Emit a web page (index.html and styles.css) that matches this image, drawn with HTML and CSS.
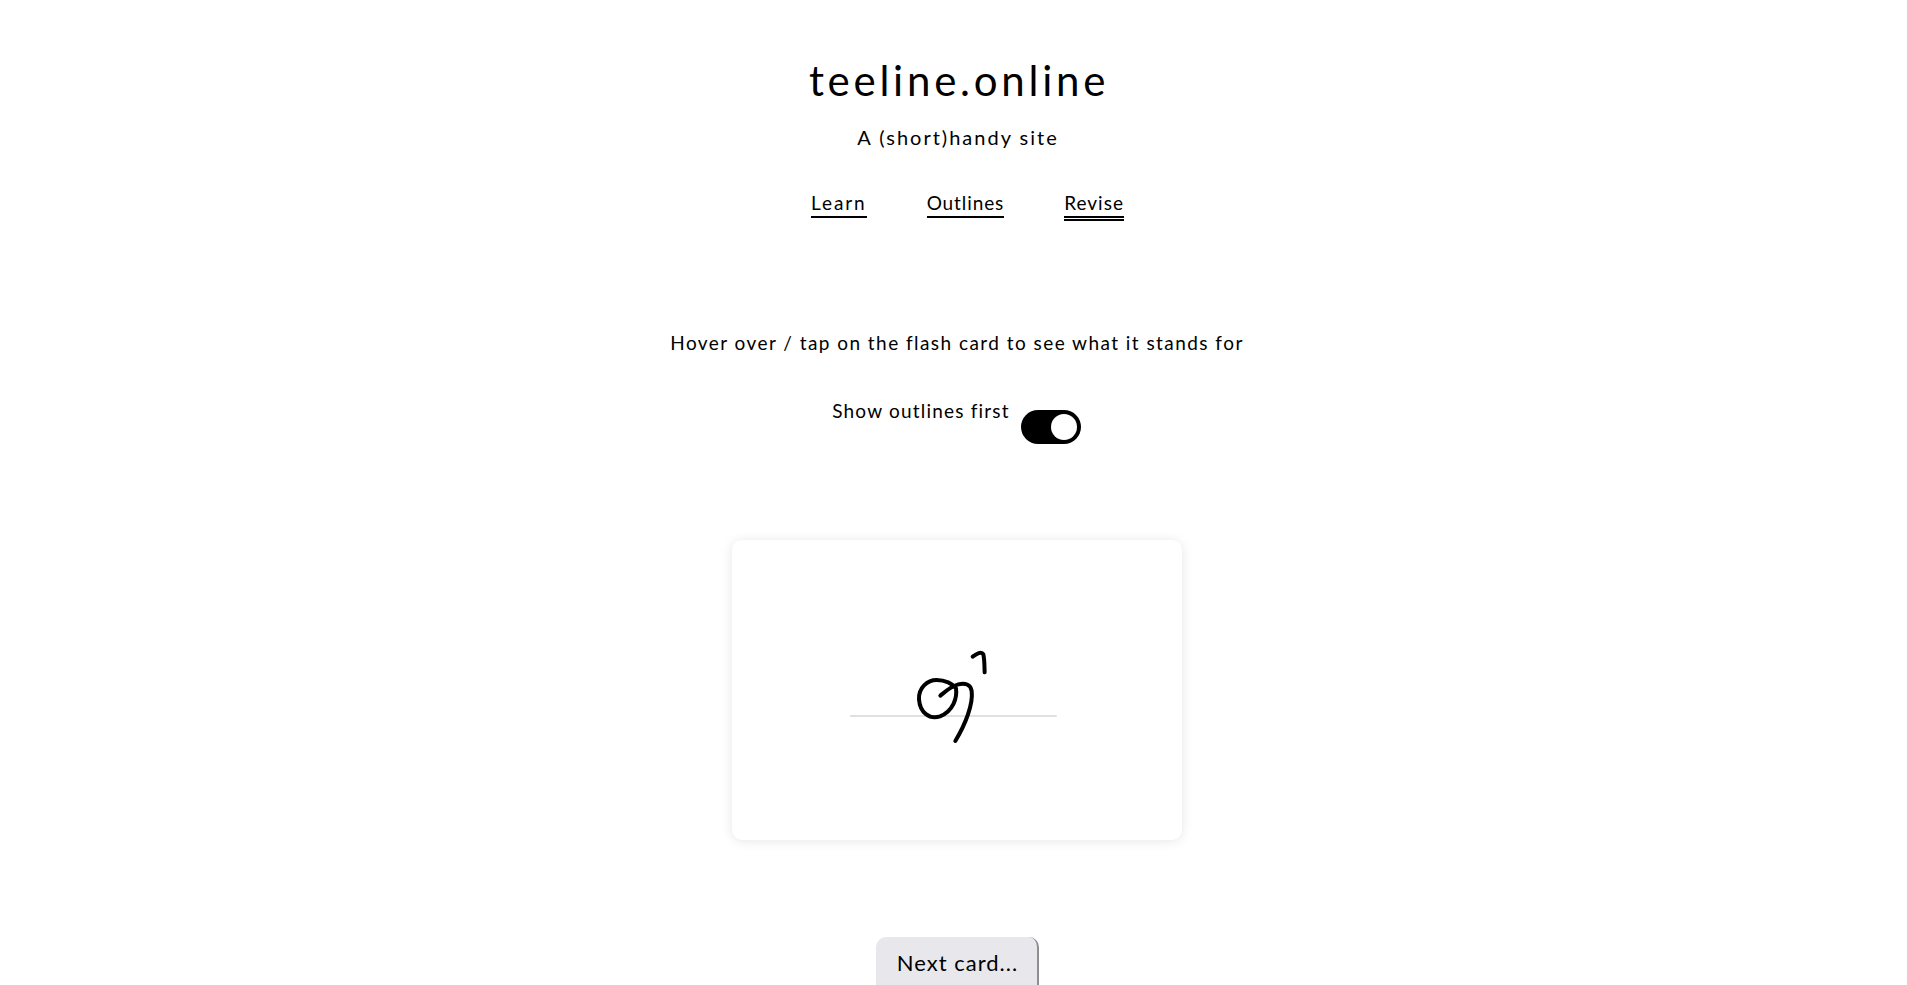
FILE: index.html
```html
<!DOCTYPE html>
<html lang="en">
<head>
<meta charset="utf-8">
<title>teeline.online</title>
<link rel="stylesheet" href="styles.css">
</head>
<body>
<div class="page">
  <header class="site-header">
    <h1 class="site-title">teeline.online</h1>
    <p class="site-tagline">A (short)handy site</p>
    <nav class="site-nav">
      <a class="nav-link nav-link-learn" href="#">Learn</a>
      <a class="nav-link nav-link-outlines" href="#">Outlines</a>
      <a class="nav-link nav-link-active" href="#">Revise</a>
    </nav>
  </header>
  <main class="revise">
    <p class="hint">Hover over / tap on the flash card to see what it stands for</p>
    <div class="toggle-row">
      <span class="toggle-label">Show outlines first</span>
      <span class="toggle"><span class="toggle-knob"></span></span>
    </div>
    <div class="flash-card">
      <svg class="outline" width="240" height="130" viewBox="-9 -18 720 390" aria-hidden="true">
        <line x1="30" y1="255" x2="650" y2="255" class="ruled"/>
        <path class="stroke" d="M348 172 C352 200 340 240 300 256 C268 266 240 245 237 205 C235 170 262 147 290 147 C315 147 338 158 348 172"/>
        <path class="stroke" d="M301 194 C315 182 332 166 355 160 C375 155 392 160 395 180 C400 220 376 280 346 330"/>
        <path class="stroke" d="M398 77 C410 68 424 60 430 70 C434 88 433 106 434 124"/>
      </svg>
    </div>
    <button class="next-card" type="button">Next card...</button>
  </main>
</div>
</body>
</html>
```
FILE: styles.css
```css
html, body {
  margin: 0;
  height: 985px;
  overflow: hidden;
  background: #fff;
}
.page {
  padding-left: 7px;
  width: 1900px;
  font-family: "Lato", "Noto Sans", sans-serif;
  color: #000;
}
.site-header {
  display: flex;
  flex-direction: column;
  align-items: center;
  padding-top: 55px;
}
.site-title {
  margin: 0 0 0 4px;
  font-size: 42px;
  line-height: 50px;
  font-weight: 400;
  letter-spacing: 3.75px;
}
.site-tagline {
  margin: 19px 0 0 2px;
  font-size: 20px;
  line-height: 26px;
  font-weight: 400;
  letter-spacing: 2px;
}
.site-nav {
  display: flex;
  gap: 60px;
  margin: 41px 0 0 21px;
}
.nav-link {
  color: #000;
  text-decoration: none;
  font-size: 19px;
  line-height: 23px;
  letter-spacing: 1.2px;
  border-bottom: 2px solid #000;
  padding-bottom: 2px;
  height: 23px;
}
.nav-link-learn {
  letter-spacing: 1.9px;
}
.nav-link-outlines {
  letter-spacing: 0.9px;
}
.nav-link-active {
  border-bottom: 5px double #000;
  letter-spacing: 1px;
}
.revise {
  display: flex;
  flex-direction: column;
  align-items: center;
}
.hint {
  margin: 110px 0 0;
  font-size: 19px;
  line-height: 24px;
  font-weight: 400;
  letter-spacing: 1.45px;
}
.toggle-row {
  display: flex;
  align-items: flex-start;
  gap: 11px;
  margin: 44px 1px 0 0;
}
.toggle-label {
  font-size: 19px;
  line-height: 24px;
  font-weight: 400;
  letter-spacing: 1.2px;
}
.toggle {
  display: flex;
  justify-content: flex-end;
  align-items: center;
  box-sizing: border-box;
  width: 60px;
  height: 34px;
  margin-top: 11px;
  padding-right: 4px;
  border-radius: 17px;
  background: #000;
}
.toggle-knob {
  display: block;
  width: 26px;
  height: 26px;
  border-radius: 50%;
  background: #fff;
}
.flash-card {
  display: flex;
  align-items: center;
  justify-content: center;
  width: 450px;
  height: 300px;
  margin-top: 96px;
  border-radius: 10px;
  background: #fff;
  box-shadow: 0 1px 12px rgba(0, 0, 0, 0.1);
}
.ruled {
  stroke: #d6d6d6;
  stroke-width: 4.5;
}
.stroke {
  fill: none;
  stroke: #000;
  stroke-width: 12;
  stroke-linecap: round;
  stroke-linejoin: round;
}
.next-card {
  box-sizing: border-box;
  width: 163px;
  height: 60px;
  margin-top: 97px;
  padding: 0 0 7px 3px;
  border-style: solid;
  border-color: #8f8f8f;
  border-width: 0 2px 2px 0;
  border-radius: 10px;
  background: #e8e8ec;
  color: #000;
  font-family: "Lato", sans-serif;
  font-size: 22px;
  font-weight: 400;
  letter-spacing: 1px;
}
```
